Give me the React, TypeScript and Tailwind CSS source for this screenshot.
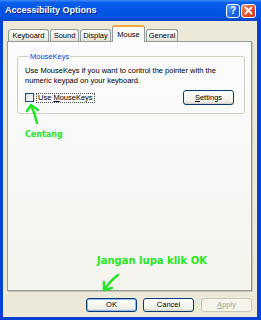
import type { ReactNode } from "react";

const tabs = [
  { label: "Keyboard", w: "w-[41px]", ml: "ml-[1px]" },
  { label: "Sound", w: "w-[29px]", ml: "ml-[1px]" },
  { label: "Display", w: "w-[31px]", ml: "ml-[1px]" },
  { label: "Mouse", w: "w-[33px]", ml: "ml-[1px]", active: true },
  { label: "General", w: "w-[32px]", ml: "ml-[1px]" },
];

const XpButton = ({
  children,
  isDefault,
  disabled,
}: {
  children: ReactNode;
  isDefault?: boolean;
  disabled?: boolean;
}) => (
  <button
    type="button"
    className={
      "flex h-[14px] w-[51px] items-center justify-center rounded-[3px] border text-[7.5px] leading-none " +
      (disabled
        ? "border-[#C9C7BA] bg-[#F5F4EA] text-[#ACA899]"
        : isDefault
          ? "border-[#003C74] bg-[linear-gradient(#FFFFFF,#F0F0EA_80%,#D6D0C5)] text-black shadow-[inset_0_0_0_1px_#8FB8F0]"
          : "border-[#003C74] bg-[linear-gradient(#FFFFFF,#F0F0EA_80%,#D6D0C5)] text-black")
    }
  >
    {children}
  </button>
);

export default function App() {
  return (
    <div className="relative flex h-[320px] w-[261px] flex-col overflow-hidden bg-[#0A3FD6] font-['Liberation_Sans',Arial,sans-serif]">
      {/* title bar */}
      <div className="flex h-[21px] shrink-0 items-center bg-[linear-gradient(#3D8DF5,#0A5EEC_12%,#0055E5_45%,#0053E0_80%,#0844C8)] pl-[5px] pr-[5px]">
        <span className="text-[9px] font-bold text-white [text-shadow:1px_1px_0_#0A1E8A]">
          Accessibility Options
        </span>
        <div className="ml-auto flex items-center gap-[1px]">
          <div className="flex h-[14px] w-[14px] items-center justify-center rounded-[3px] border border-white bg-[linear-gradient(135deg,#5A9BFF,#1F63E8_60%,#1A50C8)] text-[10px] font-bold leading-none text-white">
            ?
          </div>
          <div className="flex h-[14px] w-[15px] items-center justify-center rounded-[3px] border border-white bg-[linear-gradient(135deg,#F08A6A,#E0532B_55%,#C23A16)]">
            <svg width="9" height="9" viewBox="0 0 9 9">
              <path d="M1.5 1.5 L7.5 7.5 M7.5 1.5 L1.5 7.5" stroke="white" strokeWidth="1.8" strokeLinecap="round" />
            </svg>
          </div>
        </div>
      </div>

      {/* dialog body */}
      <div className="mb-[3px] ml-[3px] mr-[4px] flex flex-1 flex-col bg-[#ECE9D8] pl-[4px] pr-[5px] pt-[3px]">
        {/* tabs */}
        <div className="relative z-10 flex h-[17px] items-end">
          {tabs.map((t) =>
            t.active ? (
              <div
                key={t.label}
                className={`${t.w} ${t.ml} -mb-[1px] flex h-[17px] items-center justify-center rounded-t-[3px] border border-b-0 border-[#919B9C] border-t-2 border-t-[#F2A93B] bg-[#FCFCFE] text-[7.5px] text-black`}
              >
                {t.label}
              </div>
            ) : (
              <div
                key={t.label}
                className={`${t.w} ${t.ml} flex h-[12px] items-center justify-center rounded-t-[3px] border border-b-0 border-[#919B9C] bg-[linear-gradient(#FFFFFF,#F3F3EF_60%,#E3E0D4)] text-[7.5px] text-black`}
              >
                {t.label}
              </div>
            ),
          )}
        </div>

        {/* tab panel */}
        <div className="flex h-[250px] flex-col border border-[#919B9C] bg-[linear-gradient(#FCFCFE,#F4F3EE)] pl-[9px] pr-[6px] pt-[10px] shadow-[1px_1px_0_#C8C5B5]">
          <fieldset className="rounded-[3px] border border-[#D0D0BF] pb-[8px] pl-[7px] pr-[10px]">
            <legend className="ml-[4px] px-[1px] text-[7.5px] leading-[9px] text-[#0046D5]">MouseKeys</legend>
            <p className="mt-[5px] text-[7.5px] leading-[10px] text-black">
              Use MouseKeys if you want to control the pointer with the
              <br />
              numeric keypad on your keyboard.
            </p>
            <div className="mt-[4px] flex h-[15px] items-center">
              <div className="h-[9px] w-[9px] border border-[#1C5180] bg-[linear-gradient(135deg,#DCDCD7,#FFFFFF)]" />
              <span className="ml-[2px] border border-dotted border-[#555] px-[1px] text-[7.5px] leading-[8px] text-black">
                Use <u>M</u>ouseKeys
              </span>
              <button
                type="button"
                className="ml-auto flex h-[15px] w-[51px] items-center justify-center rounded-[3px] border border-[#003C74] bg-[linear-gradient(#FFFFFF,#F0F0EA_80%,#D6D0C5)] text-[7.5px] leading-none text-black"
              >
                <u>S</u>ettings
              </button>
            </div>
          </fieldset>
        </div>

        {/* bottom buttons */}
        <div className="mt-[7px] flex justify-end gap-[6px]">
          <XpButton isDefault>OK</XpButton>
          <XpButton>Cancel</XpButton>
          <div className="ml-[1px]">
            <XpButton disabled>
              <u>A</u>pply
            </XpButton>
          </div>
        </div>
      </div>

      {/* green annotations drawn over the dialog */}
      <div className="pointer-events-none absolute left-[25px] top-[129px] text-[8px] font-bold text-[#22E622] font-['DejaVu_Sans',sans-serif]">
        Centang
      </div>
      <div className="pointer-events-none absolute left-[97px] top-[253px] text-[10px] font-bold text-[#22E622] font-['DejaVu_Sans',sans-serif]">
        Jangan lupa klik OK
      </div>
      <svg className="pointer-events-none absolute left-0 top-0" width="261" height="320" viewBox="0 0 261 320">
        <g fill="none" stroke="#22E622" strokeWidth="2.4" strokeLinecap="round" strokeLinejoin="round">
          <path d="M37 123 Q35 114 31 105" />
          <path d="M27 111 L31 105 L38 110" />
          <path d="M118 275 Q110 281 105 289" />
          <path d="M104 282 L104 290 L112 288" />
        </g>
      </svg>
    </div>
  );
}
